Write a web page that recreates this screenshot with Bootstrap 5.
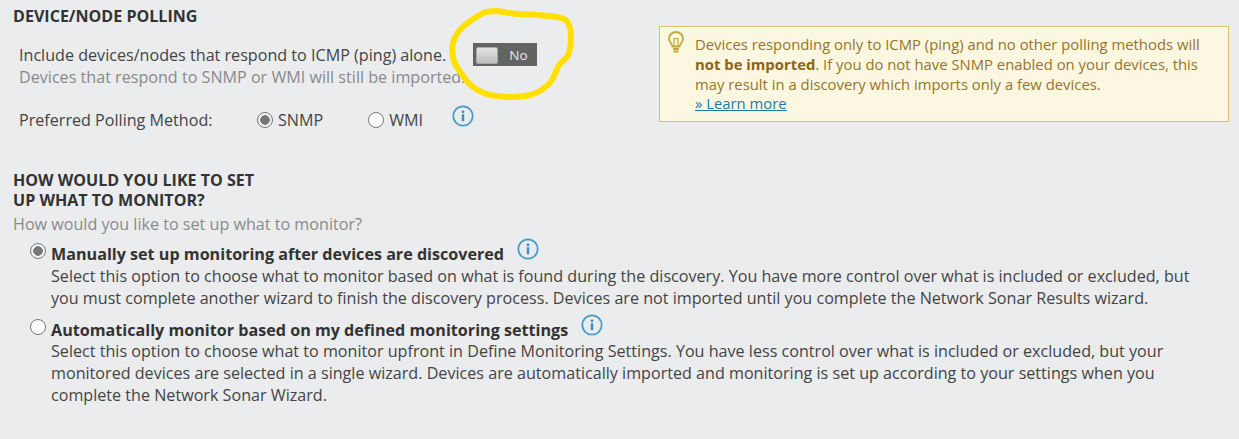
<!DOCTYPE html>
<html lang="en">
<head>
    <title>Discovery settings</title>
    <link rel="stylesheet" href="https://cdn.jsdelivr.net/npm/bootstrap@5.3.2/dist/css/bootstrap.min.css">
    <script src="https://cdn.jsdelivr.net/npm/bootstrap@5.3.2/dist/js/bootstrap.bundle.min.js"></script>
<style>
    html,body{
        height: 100%;
        overflow: hidden;
    }
    body{
        background: #ebecee;
        color: #444;
        font-family: "Open Sans", sans-serif;
        font-size: 16.14px;
        line-height: 22px;
    }
    #page{
        padding: 6px 0 0 13px;
        position: relative;
        height: 439px;
    }
    .sec-title{
        font-size: 16.07px;
        font-weight: 700;
        line-height: 20px;
        color: #333;
        margin: 0;
    }
    .hint{
        color: #8a8a8a;
    }
    #polling-top{
        width: 1216px;
    }
    #polling-left{
        width: 646px;
        padding: 18px 0 0 6px;
    }
    #ping-row{
        height: 22px;
    }
    #toggle{
        flex: none;
        width: 64px;
        height: 23px;
        background: #636363;
        color: #e8e8e8;
        font-size: 13.5px;
        padding: 1px 2px 0 3px;
        margin-left: 27px;
        margin-top: -1px;
    }
    #toggle-knob{
        width: 22px;
        height: 17px;
        background: linear-gradient(#e4e4e4, #bdbdbd);
        border: 1px solid #aaa;
        border-radius: 2px;
        margin-right: 11px;
    }
    #method-row{
        margin-top: 20px;
        height: 24px;
    }
    #method-label{
        width: 238px;
    }
    .radio-dot{
        flex: none;
        width: 16px;
        height: 16px;
        border-radius: 50%;
        border: 1.5px solid #777;
        background: #fff;
        display: inline-block;
    }
    .radio-dot.on{
        background: radial-gradient(circle, #777 0 4.5px, #f3f3f3 5px);
    }
    .radio-text{
        margin-left: 5px;
    }
    #snmp-text{
        margin-right: 45px;
    }
    #wmi-info{
        margin: -8px 0 0 29px;
    }
    #warn-box{
        width: 570px;
        height: 96px;
        background: #fcf7e0;
        border: 1px solid #d9c26c;
        color: #96752a;
        padding: 8px 20px 0 35px;
        line-height: 19.8px;
        position: relative;
        font-size: 14.85px;
    }
    #warn-box b{
        color: #8f6310;
    }
    #warn-box a{
        color: #1e7aa8;
    }
    #warn-icon{
        position: absolute;
        left: 7px;
        top: 4px;
    }
    #monitor-sec{
        margin-top: 38px;
    }
    #monitor-hint{
        margin-top: 3px;
        margin-bottom: 8px;
    }
    .opt-row{
        padding-left: 17px;
    }
    .opt-row + .opt-row{
        margin-top: 10px;
    }
    .opt-row + .opt-row .opt-desc{
        margin-top: -1px;
    }
    .opt-text{
        padding-left: 5px;
    }
    .opt-text b{
        color: #333;
    }
    .opt-head{
        height: 22px;
    }
    .opt-info{
        margin: -10px 0 0 13px;
    }
    .opt-desc{
        width: 1150px;
    }
    #scribble{
        position: absolute;
        left: 440px;
        top: 0;
        pointer-events: none;
    }
</style>
</head>
<body>
    <div id="page">
        <h2 class="sec-title">DEVICE/NODE POLLING</h2>
        <div class="d-flex" id="polling-top">
            <div id="polling-left">
                <div class="d-flex" id="ping-row">
                    <span>Include devices/nodes that respond to ICMP (ping) alone.</span>
                    <div class="d-flex align-items-center" id="toggle"><span id="toggle-knob"></span><span>No</span></div>
                </div>
                <div class="hint">Devices that respond to SNMP or WMI will still be imported.</div>
                <div class="d-flex align-items-center" id="method-row">
                    <span id="method-label">Preferred Polling Method:</span>
                    <span class="radio-dot on"></span><span class="radio-text" id="snmp-text">SNMP</span>
                    <span class="radio-dot"></span><span class="radio-text">WMI</span>
                    <svg id="wmi-info" width="22" height="22" viewBox="0 0 22 22"><circle cx="11" cy="11" r="9.700" fill="none" stroke="#4a9cc9" stroke-width="1.800"/><circle cx="11" cy="6.800" r="1.400" fill="#3a8fc0"/><rect x="9.800" y="9.200" width="2.400" height="7" fill="#3a8fc0"/></svg>
                </div>
            </div>
            <div id="warn-box">
                <svg id="warn-icon" width="18" height="24" viewBox="0 0 18 24"><path d="M5.500 15.500C5 12.500 2 11.500 2 7.800A7 6.800 0 0 1 16 7.800C16 11.500 13 12.500 12.500 15.500Z" fill="none" stroke="#c2a83a" stroke-width="1.800"/><path d="M7 15V7.500H11V15" fill="none" stroke="#c2a83a" stroke-width="1.200"/><path d="M6 18H12M6.500 20.500H11.500" stroke="#c2a83a" stroke-width="1.800"/></svg>
                Devices responding only to ICMP (ping) and no other polling methods will <b>not be imported</b>. If you do not have SNMP enabled on your devices, this may result in a discovery which imports only a few devices.<br>
                <a href="#">» Learn more</a>
            </div>
        </div>
        <div id="monitor-sec">
            <h2 class="sec-title">HOW WOULD YOU LIKE TO SET<br>UP WHAT TO MONITOR?</h2>
            <div class="hint" id="monitor-hint">How would you like to set up what to monitor?</div>
            <div class="d-flex opt-row">
                <span class="radio-dot on"></span>
                <div class="opt-text">
                    <div class="d-flex align-items-center opt-head"><b>Manually set up monitoring after devices are discovered</b>
                        <svg class="opt-info" width="22" height="22" viewBox="0 0 22 22"><circle cx="11" cy="11" r="9.700" fill="none" stroke="#4a9cc9" stroke-width="1.800"/><circle cx="11" cy="6.800" r="1.400" fill="#3a8fc0"/><rect x="9.800" y="9.200" width="2.400" height="7" fill="#3a8fc0"/></svg>
                    </div>
                    <div class="opt-desc">Select this option to choose what to monitor based on what is found during the discovery. You have more control over what is included or excluded, but you must complete another wizard to finish the discovery process. Devices are not imported until you complete the Network Sonar Results wizard.</div>
                </div>
            </div>
            <div class="d-flex opt-row">
                <span class="radio-dot"></span>
                <div class="opt-text">
                    <div class="d-flex align-items-center opt-head"><b>Automatically monitor based on my defined monitoring settings</b>
                        <svg class="opt-info" width="22" height="22" viewBox="0 0 22 22"><circle cx="11" cy="11" r="9.700" fill="none" stroke="#4a9cc9" stroke-width="1.800"/><circle cx="11" cy="6.800" r="1.400" fill="#3a8fc0"/><rect x="9.800" y="9.200" width="2.400" height="7" fill="#3a8fc0"/></svg>
                    </div>
                    <div class="opt-desc">Select this option to choose what to monitor upfront in Define Monitoring Settings. You have less control over what is included or excluded, but your monitored devices are selected in a single wizard. Devices are automatically imported and monitoring is set up according to your settings when you complete the Network Sonar Wizard.</div>
                </div>
            </div>
        </div>
        <svg id="scribble" width="150" height="110" viewBox="0 0 150 110"><path d="M43 13C48 11 52 11 57 11C65 12 72 14 80 14C92 15 105 15 117 17C123 18 127 20 128 23C131 28 131 32 131 37C131 45 130 52 127 57C123 61 120 63 118 67C115 73 114 78 110 83C104 89 98 93 90 95C82 97 75 97 67 97C60 97 56 96 50 95C43 93 38 91 33 87C28 83 24 78 21 73C17 68 14 63 13 57C12 52 12 48 13 43C15 36 18 31 23 27C29 21 36 17 43 13Z" fill="none" stroke="#ffe000" stroke-width="6" stroke-linejoin="round"/></svg>
    </div>
</body>
</html>
